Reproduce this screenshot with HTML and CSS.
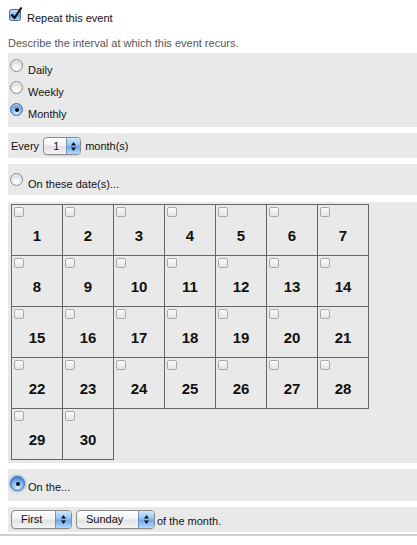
FILE: index.html
```html
<!DOCTYPE html>
<html>
<head>
<meta charset="utf-8">
<link rel="stylesheet" href="styles.css">
</head>
<body>
<div class="repeat">
  <svg class="cb-checked" width="15" height="15" viewBox="0 0 15 15">
    <defs>
      <linearGradient id="blue" x1="0" y1="0" x2="0" y2="1">
        <stop offset="0" stop-color="#d3e7fb"/>
        <stop offset="0.5" stop-color="#7fb4ec"/>
        <stop offset="0.51" stop-color="#5e9ee6"/>
        <stop offset="1" stop-color="#b8dafc"/>
      </linearGradient>
    </defs>
    <rect x="1.5" y="3.5" width="11" height="11" rx="2" fill="url(#blue)" stroke="#4a6a98"/>
    <path d="M3.5 8.5 L6.5 12 L13.5 1.5" fill="none" stroke="#111" stroke-width="2.2"/>
  </svg>
  <span class="repeat-label">Repeat this event</span>
</div>
<p class="desc">Describe the interval at which this event recurs.</p>

<div class="panel freq">
  <div class="row"><span class="radio"></span><span class="lbl">Daily</span></div>
  <div class="row"><span class="radio"></span><span class="lbl">Weekly</span></div>
  <div class="row"><span class="radio on"></span><span class="lbl">Monthly</span></div>
</div>

<div class="panel every">
  <span>Every</span>
  <span class="sel sel-num"><span class="val">1</span><span class="arr"><svg width="7" height="11" viewBox="0 0 7 11"><path d="M3.5 1 L6 4.5 L1 4.5 Z M1 6.5 L6 6.5 L3.5 10 Z" fill="#111"/></svg></span></span>
  <span>month(s)</span>
</div>

<div class="panel dates-opt">
  <span class="radio"></span><span class="lbl">On these date(s)...</span>
</div>

<div class="panel cal-panel">
  <div class="cal">
    <div class="cell"><span class="box"></span><span class="num">1</span></div>
    <div class="cell"><span class="box"></span><span class="num">2</span></div>
    <div class="cell"><span class="box"></span><span class="num">3</span></div>
    <div class="cell"><span class="box"></span><span class="num">4</span></div>
    <div class="cell"><span class="box"></span><span class="num">5</span></div>
    <div class="cell"><span class="box"></span><span class="num">6</span></div>
    <div class="cell"><span class="box"></span><span class="num">7</span></div>
    <div class="cell"><span class="box"></span><span class="num">8</span></div>
    <div class="cell"><span class="box"></span><span class="num">9</span></div>
    <div class="cell"><span class="box"></span><span class="num">10</span></div>
    <div class="cell"><span class="box"></span><span class="num">11</span></div>
    <div class="cell"><span class="box"></span><span class="num">12</span></div>
    <div class="cell"><span class="box"></span><span class="num">13</span></div>
    <div class="cell"><span class="box"></span><span class="num">14</span></div>
    <div class="cell"><span class="box"></span><span class="num">15</span></div>
    <div class="cell"><span class="box"></span><span class="num">16</span></div>
    <div class="cell"><span class="box"></span><span class="num">17</span></div>
    <div class="cell"><span class="box"></span><span class="num">18</span></div>
    <div class="cell"><span class="box"></span><span class="num">19</span></div>
    <div class="cell"><span class="box"></span><span class="num">20</span></div>
    <div class="cell"><span class="box"></span><span class="num">21</span></div>
    <div class="cell"><span class="box"></span><span class="num">22</span></div>
    <div class="cell"><span class="box"></span><span class="num">23</span></div>
    <div class="cell"><span class="box"></span><span class="num">24</span></div>
    <div class="cell"><span class="box"></span><span class="num">25</span></div>
    <div class="cell"><span class="box"></span><span class="num">26</span></div>
    <div class="cell"><span class="box"></span><span class="num">27</span></div>
    <div class="cell"><span class="box"></span><span class="num">28</span></div>
    <div class="cell"><span class="box"></span><span class="num">29</span></div>
    <div class="cell"><span class="box"></span><span class="num">30</span></div>
  </div>
</div>

<div class="panel onthe">
  <span class="radio big on"></span><span class="lbl">On the...</span>
</div>

<div class="panel which">
  <span class="sel sel-first"><span class="val">First</span><span class="arr"><svg width="7" height="11" viewBox="0 0 7 11"><path d="M3.5 1 L6 4.5 L1 4.5 Z M1 6.5 L6 6.5 L3.5 10 Z" fill="#111"/></svg></span></span>
  <span class="sel sel-day"><span class="val">Sunday</span><span class="arr"><svg width="7" height="11" viewBox="0 0 7 11"><path d="M3.5 1 L6 4.5 L1 4.5 Z M1 6.5 L6 6.5 L3.5 10 Z" fill="#111"/></svg></span></span>
  <span class="tail">of the month.</span>
</div>
<div class="rule"></div>
</body>
</html>
```
FILE: styles.css
```css
* { box-sizing: border-box; }
html, body { margin: 0; padding: 0; background: #fff; }
body {
  font-family: "Liberation Sans", Arial, sans-serif;
  font-size: 11px;
  color: #111;
  width: 417px;
}

.repeat {
  height: 36px;
  display: flex;
  align-items: flex-start;
  padding-left: 8px;
}
.cb-checked { margin-top: 6px; display: block; }
.repeat-label { margin-left: 4px; margin-top: 12px; line-height: 13px; }

.desc {
  margin: 0;
  height: 17px;
  line-height: 15px;
  padding-left: 8px;
  color: #555;
}

.panel {
  margin-left: 8px;
  background: #e9e9e9;
}

.freq { height: 74px; padding-top: 2px; margin-bottom: 6px; }
.row { height: 22px; display: flex; }
.row .radio { margin-top: 4px; }
.lbl { line-height: 13px; }
.row .lbl { align-self: flex-end; margin-left: 5px; }

.radio {
  display: block;
  width: 13px;
  height: 13px;
  margin-left: 2px;
  border-radius: 50%;
  border: 1px solid #8d8d8d;
  background: radial-gradient(circle at 50% 75%, #ffffff 0, #f4f4f4 35%, #d2d2d2 75%, #bdbdbd 100%);
  box-shadow: inset 0 1px 1px rgba(255,255,255,0.8);
  position: relative;
  flex: none;
}
.radio.on {
  border-color: #3f6aa3;
  background: radial-gradient(circle at 50% 80%, #d9efff 0, #8dc3f4 40%, #4d8fdc 75%, #2f6fc0 100%);
}
.radio.on::after {
  content: "";
  position: absolute;
  left: 3.5px;
  top: 3.5px;
  width: 4px;
  height: 4px;
  border-radius: 50%;
  background: #111;
}
.radio.big {
  width: 15px;
  height: 15px;
  box-shadow: 0 0 2px 1px rgba(80,150,230,0.6);
}
.radio.big.on::after { left: 4.5px; top: 4.5px; }

.every {
  height: 25px;
  margin-bottom: 6px;
  display: flex;
  align-items: center;
  padding-left: 3px;
  gap: 4px;
}

.sel {
  display: inline-flex;
  height: 18px;
  border: 1px solid #8a8a8a;
  border-radius: 4px;
  overflow: hidden;
  background: linear-gradient(#ffffff, #f3f3f3 45%, #e2e2e2 55%, #f4f4f4);
  box-shadow: 0 1px 0 rgba(0,0,0,0.08);
}
.sel .val { flex: 1; line-height: 16px; padding-left: 9px; }
.sel .arr {
  width: 14px;
  flex: none;
  display: flex;
  align-items: center;
  justify-content: center;
  border-left: 1px solid #6f92c4;
  background: linear-gradient(#d2e8fd, #93c2f2 45%, #6ea8ea 55%, #b5dafd);
}
.sel-num { width: 38px; margin-top: 1px; }
.sel-num .val { padding-left: 9px; }

.dates-opt {
  height: 31px;
  margin-bottom: 7px;
  display: flex;
  align-items: flex-start;
  padding-top: 8px;
}
.dates-opt .radio { margin-top: 1px; }
.dates-opt .lbl { margin-left: 5px; margin-top: 6px; }

.cal-panel {
  height: 261px;
  padding: 2px 0 0 3px;
  margin-bottom: 6px;
}
.cal {
  display: grid;
  grid-template-columns: 52px repeat(6, 51px);
  grid-template-rows: 52px repeat(4, 51px);
}
.cell {
  border-right: 1px solid #666;
  border-bottom: 1px solid #666;
  padding: 2px 0 0 2px;
}
.cell:nth-child(7n+1) { border-left: 1px solid #666; }
.cell:nth-child(-n+7) { border-top: 1px solid #666; }
.box {
  display: block;
  width: 10px;
  height: 10px;
  border: 1px solid #a9a9a9;
  border-radius: 2px;
  background: linear-gradient(#fbfbfb, #e4e4e4);
}
.num {
  display: block;
  margin-top: 10px;
  margin-left: -2px;
  text-align: center;
  font-weight: bold;
  font-size: 15px;
  line-height: 18px;
  color: #111;
}

.onthe {
  height: 32px;
  margin-bottom: 6px;
  display: flex;
  align-items: flex-start;
  padding-top: 7px;
}
.onthe .lbl { margin-left: 3px; margin-top: 5px; }

.which {
  height: 25px;
  display: flex;
  align-items: center;
  padding-left: 3px;
  gap: 4px;
}
.sel-first { width: 61px; height: 19px; }
.sel-day { width: 79px; height: 19px; }
.sel-first .val, .sel-day .val { padding-left: 9px; line-height: 17px; }
.sel-first .arr, .sel-day .arr { width: 16px; }
.tail { margin-left: -2px; padding-top: 2px; }

.rule {
  margin-top: 2px;
  height: 2px;
  background: #cfcfcf;
}
```
